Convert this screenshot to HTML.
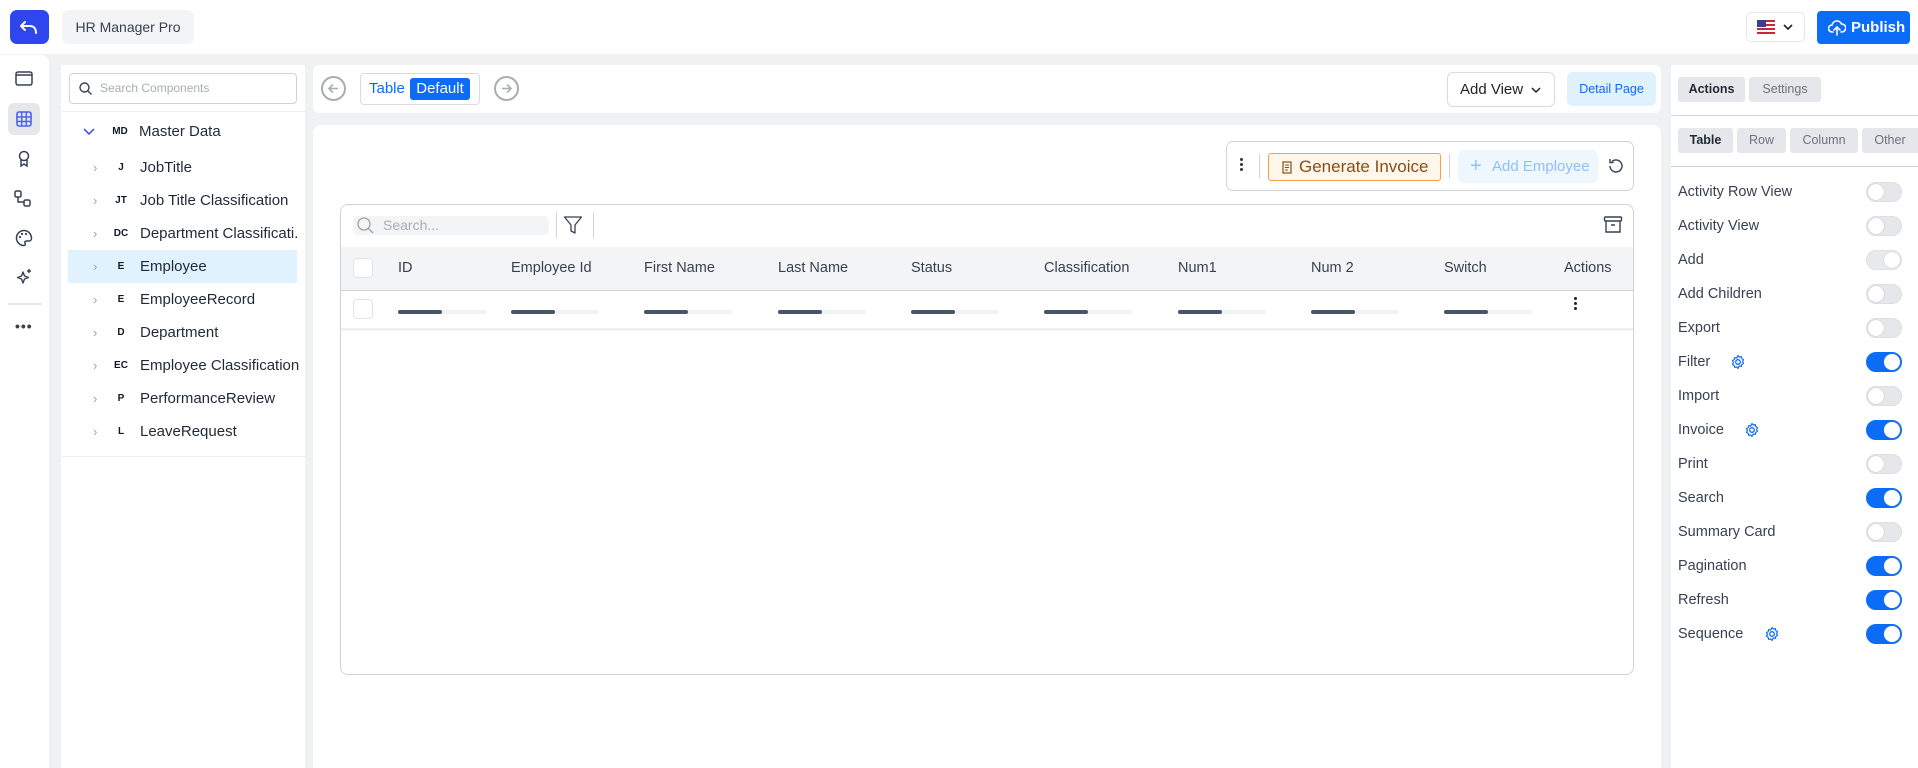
<!DOCTYPE html>
<html><head><meta charset="utf-8"><style>
*{box-sizing:border-box;margin:0;padding:0}
body{width:1918px;height:768px;overflow:hidden;background:#f0f1f3;font-family:"Liberation Sans",sans-serif;color:#374151;position:relative}
.abs{position:absolute}
.top{left:0;top:0;width:1918px;height:54px;background:#fff}
.back{left:10px;top:10px;width:39px;height:34px;background:#2f45ee;border-radius:7px}
.app{left:62px;top:10px;width:132px;height:34px;background:#f3f4f6;border-radius:7px;font-size:14px;line-height:34px;text-align:center;color:#374151}
.lang{left:1746px;top:12px;width:59px;height:30px;border:1px solid #e5e7eb;border-radius:5px;background:#fff}
.pub{left:1817px;top:11px;width:93px;height:33px;background:#0a6cf7;border-radius:4px;color:#fff;font-size:15px;font-weight:bold;line-height:33px;padding-left:34px}
.rail{left:0;top:55px;width:49px;height:713px;background:#fff;border-radius:0 8px 0 0}
.lp{left:61px;top:65px;width:244px;height:703px;background:#fff}
.srch{left:69px;top:73px;width:228px;height:31px;border:1px solid #cfd3d8;border-radius:4px;font-size:12px;color:#a8adb5;line-height:29px;padding-left:30px}
.tr{left:61px;width:244px;height:33px;font-size:15px;line-height:33px;color:#1f2937}
.tr .ch{position:absolute;left:32px;color:#9ca3af;font-size:13px}
.tr .ab{position:absolute;left:40px;width:40px;text-align:center;font-size:10px;font-weight:bold;color:#111827}
.tr .t{position:absolute;left:79px}
.ctb{left:313px;top:65px;width:1348px;height:48px;background:#fff;border-radius:6px}
.main{left:313px;top:125px;width:1348px;height:643px;background:#fff;border-radius:8px 8px 0 0}
.circ{width:25px;height:25px;border:2px solid #a9adb3;border-radius:50%;top:76px}
.card{left:340px;top:204px;width:1294px;height:471px;border:1px solid #cfd3d8;border-radius:8px;overflow:hidden}
.hdr{left:0;top:42px;width:1294px;height:44px;background:#f3f4f6;border-bottom:1px solid #d1d5db}
.hdr span{position:absolute;top:13px;font-size:14.5px;color:#374151}
.cb{width:20px;height:20px;border:1px solid #dfe2e6;border-radius:4px;background:#fff}
.bar{height:4px;width:88px;background:#f1f2f4;border-radius:2px}
.bar i{display:block;height:4px;width:44px;background:#475569;border-radius:2px}
.rp{left:1671px;top:65px;width:247px;height:703px;background:#fff}
.tab{height:25px;border-radius:3px;background:#e5e7eb;font-size:12.5px;line-height:25px;text-align:center;color:#6b7280}
.lab{left:1678px;font-size:14.5px;color:#374151}
.tg{left:1866px;width:36px;height:20px;border-radius:10px;background:#e5e7eb;border:1px solid #dcdfe3}
.tg i{position:absolute;top:1px;left:1px;width:16px;height:16px;border-radius:50%;background:#fff;box-shadow:0 0 1px #999}
.tg.on{background:#0a6cf7;border-color:#0a6cf7}
.tg.on i{left:17px}
.gear{width:16px;height:16px}
</style></head><body>
<div class="abs top"></div>
<div class="abs back"><svg width="39" height="34" viewBox="0 0 39 34"><path d="M15 12l-4 4 4 4M11 16h9c4 0 6 3 6 7" fill="none" stroke="#fff" stroke-width="2" stroke-linecap="round" stroke-linejoin="round"/></svg></div>
<div class="abs app">HR Manager Pro</div>
<div class="abs lang"><svg class="abs" style="left:10px;top:7px" width="18" height="14" viewBox="0 0 18 14"><rect width="18" height="14" fill="#fff"/><g fill="#c8263a"><rect y="0" width="18" height="2"/><rect y="4" width="18" height="2"/><rect y="8" width="18" height="2"/><rect y="12" width="18" height="2"/></g><rect width="9" height="7" fill="#3b3f8f"/></svg><svg class="abs" style="left:36px;top:10px" width="10" height="8" viewBox="0 0 10 8"><path d="M1 2l4 4 4-4" fill="none" stroke="#222" stroke-width="1.6"/></svg></div>
<div class="abs pub"><svg class="abs" style="left:11px;top:8px" width="18" height="17" viewBox="0 0 18 17"><path d="M5 13H4a3.5 3.5 0 0 1 0-7 5 5 0 0 1 9.5-1A3.5 3.5 0 0 1 14 13h-1M9 8v8M6 11l3-3 3 3" fill="none" stroke="#fff" stroke-width="1.6" stroke-linecap="round"/></svg>Publish</div>

<div class="abs rail">
<svg class="abs" style="left:15px;top:16px" width="18" height="15" viewBox="0 0 18 15"><rect x="1" y="1" width="16" height="13" rx="2" fill="none" stroke="#374151" stroke-width="1.5"/><path d="M1 4h16" stroke="#374151" stroke-width="1.5"/></svg>
<div class="abs" style="left:8px;top:48px;width:32px;height:32px;background:#e5e7eb;border-radius:6px"></div>
<svg class="abs" style="left:16px;top:56px" width="16" height="16" viewBox="0 0 16 16"><rect x="1" y="1" width="14" height="14" rx="2" fill="none" stroke="#4f5ff0" stroke-width="1.6"/><path d="M1 6h14M1 10.5h14M5.7 1v14M10.3 1v14" stroke="#4f5ff0" stroke-width="1.4"/></svg>
<svg class="abs" style="left:16px;top:95px" width="16" height="18" viewBox="0 0 16 18"><circle cx="8" cy="6" r="4.5" fill="none" stroke="#374151" stroke-width="1.5"/><path d="M5 10v6l3-2 3 2v-6" fill="none" stroke="#374151" stroke-width="1.5"/></svg>
<svg class="abs" style="left:14px;top:135px" width="18" height="18" viewBox="0 0 18 18"><rect x="1" y="1" width="6" height="6" rx="1.5" fill="none" stroke="#374151" stroke-width="1.5"/><rect x="10" y="10" width="6" height="6" rx="1.5" fill="none" stroke="#374151" stroke-width="1.5"/><path d="M4 7v5h6" fill="none" stroke="#374151" stroke-width="1.5"/></svg>
<svg class="abs" style="left:15px;top:174px" width="18" height="18" viewBox="0 0 18 18"><path d="M9 1.5a7.5 7.5 0 0 0 0 15c1.5 0 1.5-1.5 1-2.5s0-2 1.5-2H14a2.5 2.5 0 0 0 2.5-2.5C16.5 5 13 1.5 9 1.5z" fill="none" stroke="#374151" stroke-width="1.5"/><circle cx="5" cy="8" r="1.1" fill="#374151"/><circle cx="7" cy="5" r="1.1" fill="#374151"/><circle cx="11" cy="5" r="1.1" fill="#374151"/></svg>
<svg class="abs" style="left:15px;top:213px" width="18" height="18" viewBox="0 0 18 18"><path d="M8 4l1.5 4 4 1.5-4 1.5L8 15l-1.5-4-4-1.5 4-1.5z M14 1v4M12 3h4" fill="none" stroke="#374151" stroke-width="1.4" stroke-linejoin="round"/></svg>
<div class="abs" style="left:8px;top:248px;width:34px;height:2px;background:#e5e7eb"></div>
<div class="abs" style="left:15px;top:263px;font-size:14px;font-weight:bold;color:#374151;letter-spacing:1px">•••</div>
</div>

<div class="abs lp"></div>
<div class="abs srch"><svg class="abs" style="left:9px;top:8px" width="13" height="13" viewBox="0 0 13 13"><circle cx="5.5" cy="5.5" r="4.5" fill="none" stroke="#374151" stroke-width="1.4"/><path d="M9 9l3.5 3.5" stroke="#374151" stroke-width="1.4"/></svg>Search Components</div>
<div class="abs" style="left:61px;top:111px;width:244px;height:1px;background:#eef0f2"></div>
<div class="abs tr" style="top:115px"><span class="ch" style="left:22px;color:#2f45ee"><svg width="12" height="8" viewBox="0 0 12 8"><path d="M1 1l5 5 5-5" fill="none" stroke="#2f45ee" stroke-width="1.5"/></svg></span><span class="ab" style="left:39px;width:40px">MD</span><span class="t" style="left:78px">Master Data</span></div>
<div class="abs" style="left:68px;top:250px;width:229px;height:33px;background:#e0f2fd"></div>
<div class="abs tr" style="top:151px"><span class="ch">›</span><span class="ab">J</span><span class="t">JobTitle</span></div>
<div class="abs tr" style="top:184px"><span class="ch">›</span><span class="ab">JT</span><span class="t">Job Title Classification</span></div>
<div class="abs tr" style="top:217px"><span class="ch">›</span><span class="ab">DC</span><span class="t">Department Classificati.</span></div>
<div class="abs tr" style="top:250px"><span class="ch">›</span><span class="ab">E</span><span class="t">Employee</span></div>
<div class="abs tr" style="top:283px"><span class="ch">›</span><span class="ab">E</span><span class="t">EmployeeRecord</span></div>
<div class="abs tr" style="top:316px"><span class="ch">›</span><span class="ab">D</span><span class="t">Department</span></div>
<div class="abs tr" style="top:349px"><span class="ch">›</span><span class="ab">EC</span><span class="t">Employee Classification</span></div>
<div class="abs tr" style="top:382px"><span class="ch">›</span><span class="ab">P</span><span class="t">PerformanceReview</span></div>
<div class="abs tr" style="top:415px"><span class="ch">›</span><span class="ab">L</span><span class="t">LeaveRequest</span></div>
<div class="abs" style="left:61px;top:456px;width:244px;height:1px;background:#eef0f2"></div>

<div class="abs ctb"></div>
<div class="abs circ" style="left:321px"><svg class="abs" style="left:4px;top:4px" width="13" height="13" viewBox="0 0 13 13"><path d="M11 6.5H2M6 2.5l-4 4 4 4" fill="none" stroke="#a9adb3" stroke-width="1.6"/></svg></div>
<div class="abs" style="left:360px;top:73px;width:120px;height:32px;border:1px solid #d8dbdf;border-radius:4px"></div>
<div class="abs" style="left:369px;top:80px;font-size:15px;color:#0a6cf7">Table</div>
<div class="abs" style="left:410px;top:78px;width:60px;height:22px;background:#0a6cf7;border-radius:3px;color:#fff;font-size:15px;line-height:22px;text-align:center">Default</div>
<div class="abs circ" style="left:494px"><svg class="abs" style="left:4px;top:4px" width="13" height="13" viewBox="0 0 13 13"><path d="M2 6.5h9M7 2.5l4 4-4 4" fill="none" stroke="#a9adb3" stroke-width="1.6"/></svg></div>
<div class="abs" style="left:1447px;top:72px;width:108px;height:35px;border:1px solid #d8dbdf;border-radius:6px;font-size:15px;line-height:33px;padding-left:12px;color:#222">Add View <svg width="10" height="8" viewBox="0 0 10 8" style="margin-left:4px"><path d="M1 2l4 4 4-4" fill="none" stroke="#222" stroke-width="1.5"/></svg></div>
<div class="abs" style="left:1567px;top:72px;width:89px;height:34px;background:#dff1fd;border-radius:6px;color:#0a6cf7;font-size:12.5px;line-height:34px;text-align:center">Detail Page</div>

<div class="abs main"></div>
<div class="abs" style="left:1226px;top:141px;width:408px;height:50px;border:1px solid #cfd3d8;border-radius:7px"></div>
<div class="abs" style="left:1240px;top:158px;width:3px"><i style="display:block;width:3px;height:3px;background:#333;border-radius:50%;margin-bottom:2px"></i><i style="display:block;width:3px;height:3px;background:#333;border-radius:50%;margin-bottom:2px"></i><i style="display:block;width:3px;height:3px;background:#333;border-radius:50%"></i></div>
<div class="abs" style="left:1259px;top:154px;width:1px;height:24px;background:#d1d5db"></div>
<div class="abs" style="left:1268px;top:153px;width:173px;height:28px;background:#fff7ec;border:1px solid #f5a145;border-radius:3px;color:#8b4c12;font-size:17px;line-height:26px;padding-left:30px"><svg class="abs" style="left:13px;top:7px" width="10" height="13" viewBox="0 0 10 13"><rect x="1" y="1" width="8" height="11" fill="none" stroke="#8b4c12" stroke-width="1.2"/><path d="M3 4h4M3 6.5h4M3 9h3" stroke="#8b4c12" stroke-width="1"/></svg>Generate Invoice</div>
<div class="abs" style="left:1449px;top:154px;width:1px;height:24px;background:#d1d5db"></div>
<div class="abs" style="left:1458px;top:150px;width:140px;height:33px;background:#eef6fe;border-radius:6px;color:#8fc0fa;font-size:15px;line-height:33px;padding-left:34px"><span class="abs" style="left:12px;top:0;font-size:20px">+</span>Add Employee</div>
<svg class="abs" style="left:1607px;top:157px" width="18" height="18" viewBox="0 0 18 18"><path d="M3 9a6 6 0 1 0 2-4.5M3 2v3.5h3.5" fill="none" stroke="#374151" stroke-width="1.4"/></svg>

<div class="abs card">
<div class="abs" style="left:12px;top:11px;width:196px;height:19px;background:#f3f4f6;border-radius:5px;font-size:14px;color:#a8adb5;line-height:19px;padding-left:30px"><svg class="abs" style="left:4px;top:1px" width="17" height="17" viewBox="0 0 17 17"><circle cx="7" cy="7" r="6" fill="none" stroke="#9ca3af" stroke-width="1.3"/><path d="M11.5 11.5l4.5 4.5" stroke="#9ca3af" stroke-width="1.3"/></svg>Search...</div>
<div class="abs" style="left:215px;top:7px;width:1px;height:26px;background:#d1d5db"></div>
<svg class="abs" style="left:222px;top:10px" width="20" height="20" viewBox="0 0 20 20"><path d="M1.5 2h17l-6.5 8v8l-4-2v-6z" fill="none" stroke="#374151" stroke-width="1.3" stroke-linejoin="round"/></svg>
<div class="abs" style="left:252px;top:7px;width:1px;height:26px;background:#d1d5db"></div>
<svg class="abs" style="left:1262px;top:10px" width="20" height="20" viewBox="0 0 20 20"><rect x="1.5" y="2" width="17" height="4" rx="1" fill="none" stroke="#374151" stroke-width="1.4"/><path d="M3 6v11h14V6M8 10h4" fill="none" stroke="#374151" stroke-width="1.4"/></svg>
<div class="abs hdr">
<div class="abs cb" style="left:12px;top:11px"></div>
<span style="left:57px">ID</span><span style="left:170px">Employee Id</span><span style="left:303px">First Name</span><span style="left:437px">Last Name</span><span style="left:570px">Status</span><span style="left:703px">Classification</span><span style="left:837px">Num1</span><span style="left:970px">Num 2</span><span style="left:1103px">Switch</span><span style="left:1223px">Actions</span>
</div>
<div class="abs cb" style="left:12px;top:94px"></div>
<div class="abs bar" style="left:57px;top:105px"><i></i></div>
<div class="abs bar" style="left:170px;top:105px"><i></i></div>
<div class="abs bar" style="left:303px;top:105px"><i></i></div>
<div class="abs bar" style="left:437px;top:105px"><i></i></div>
<div class="abs bar" style="left:570px;top:105px"><i></i></div>
<div class="abs bar" style="left:703px;top:105px"><i></i></div>
<div class="abs bar" style="left:837px;top:105px"><i></i></div>
<div class="abs bar" style="left:970px;top:105px"><i></i></div>
<div class="abs bar" style="left:1103px;top:105px"><i></i></div>
<div class="abs" style="left:1233px;top:92px;width:3px"><i style="display:block;width:3px;height:3px;background:#222;border-radius:50%;margin-bottom:2px"></i><i style="display:block;width:3px;height:3px;background:#222;border-radius:50%;margin-bottom:2px"></i><i style="display:block;width:3px;height:3px;background:#222;border-radius:50%"></i></div>
<div class="abs" style="left:0;top:123px;width:1294px;height:3px;background:#eef0f2"></div>
</div>

<div class="abs rp"></div>
<div class="abs tab" style="left:1678px;top:77px;width:67px;font-weight:bold;color:#1f2937">Actions</div>
<div class="abs tab" style="left:1749px;top:77px;width:72px">Settings</div>
<div class="abs" style="left:1671px;top:115px;width:247px;height:1px;background:#d1d5db"></div>
<div class="abs tab" style="left:1678px;top:128px;width:55px;color:#1f2937;font-weight:bold">Table</div>
<div class="abs tab" style="left:1737px;top:128px;width:49px">Row</div>
<div class="abs tab" style="left:1790px;top:128px;width:68px">Column</div>
<div class="abs tab" style="left:1862px;top:128px;width:56px;border-radius:3px 0 0 3px">Other</div>
<div class="abs" style="left:1671px;top:166px;width:247px;height:1px;background:#d1d5db"></div>

<div class="abs lab" style="top:184px">Activity Row View</div><div class="abs tg" style="top:182px"><i></i></div>
<div class="abs lab" style="top:218px">Activity View</div><div class="abs tg" style="top:216px"><i></i></div>
<div class="abs lab" style="top:252px">Add</div><div class="abs tg" style="top:250px;opacity:.9"><i style="left:17px"></i></div>
<div class="abs lab" style="top:286px">Add Children</div><div class="abs tg" style="top:284px"><i></i></div>
<div class="abs lab" style="top:320px">Export</div><div class="abs tg" style="top:318px"><i></i></div>
<div class="abs lab" style="top:354px">Filter</div><div class="abs tg on" style="top:352px"><i></i></div>
<div class="abs lab" style="top:388px">Import</div><div class="abs tg" style="top:386px"><i></i></div>
<div class="abs lab" style="top:422px">Invoice</div><div class="abs tg on" style="top:420px"><i></i></div>
<div class="abs lab" style="top:456px">Print</div><div class="abs tg" style="top:454px"><i></i></div>
<div class="abs lab" style="top:490px">Search</div><div class="abs tg on" style="top:488px"><i></i></div>
<div class="abs lab" style="top:524px">Summary Card</div><div class="abs tg" style="top:522px"><i></i></div>
<div class="abs lab" style="top:558px">Pagination</div><div class="abs tg on" style="top:556px"><i></i></div>
<div class="abs lab" style="top:592px">Refresh</div><div class="abs tg on" style="top:590px"><i></i></div>
<div class="abs lab" style="top:626px">Sequence</div><div class="abs tg on" style="top:624px"><i></i></div>

<svg class="abs gear" style="left:1730px;top:354px" viewBox="0 0 16 16"><circle cx="8" cy="8" r="2.3" fill="none" stroke="#0a6cf7" stroke-width="1.3"/><path d="M8 1.5l1.3 1.6 2-.5.5 2 1.7 1-.9 1.9.9 1.9-1.7 1-.5 2-2-.5L8 14.5l-1.3-1.6-2 .5-.5-2-1.7-1 .9-1.9-.9-1.9 1.7-1 .5-2 2 .5z" fill="none" stroke="#0a6cf7" stroke-width="1.2" stroke-linejoin="round"/></svg>
<svg class="abs gear" style="left:1744px;top:422px" viewBox="0 0 16 16"><circle cx="8" cy="8" r="2.3" fill="none" stroke="#0a6cf7" stroke-width="1.3"/><path d="M8 1.5l1.3 1.6 2-.5.5 2 1.7 1-.9 1.9.9 1.9-1.7 1-.5 2-2-.5L8 14.5l-1.3-1.6-2 .5-.5-2-1.7-1 .9-1.9-.9-1.9 1.7-1 .5-2 2 .5z" fill="none" stroke="#0a6cf7" stroke-width="1.2" stroke-linejoin="round"/></svg>
<svg class="abs gear" style="left:1764px;top:626px" viewBox="0 0 16 16"><circle cx="8" cy="8" r="2.3" fill="none" stroke="#0a6cf7" stroke-width="1.3"/><path d="M8 1.5l1.3 1.6 2-.5.5 2 1.7 1-.9 1.9.9 1.9-1.7 1-.5 2-2-.5L8 14.5l-1.3-1.6-2 .5-.5-2-1.7-1 .9-1.9-.9-1.9 1.7-1 .5-2 2 .5z" fill="none" stroke="#0a6cf7" stroke-width="1.2" stroke-linejoin="round"/></svg>
</body></html>
